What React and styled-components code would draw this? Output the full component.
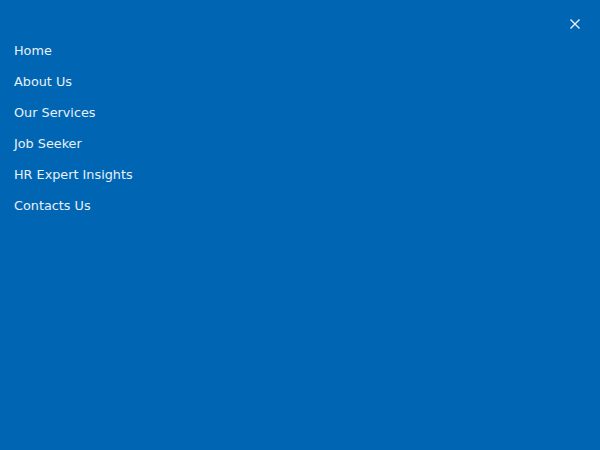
import React from 'react'
import styled, { createGlobalStyle } from 'styled-components'

const links = ['Home', 'About Us', 'Our Services', 'Job Seeker', 'HR Expert Insights', 'Contacts Us']

export default () => (
  <>
    <Global />
    <Drawer>
      <TopBar>
        <Close aria-label="Close">
          <svg width="10" height="10" viewBox="0 0 10 10">
            <path d="M0.5 0.5L9.5 9.5M9.5 0.5L0.5 9.5" stroke="currentColor" strokeWidth="1.4" />
          </svg>
        </Close>
      </TopBar>
      <Nav>
        {links.map(link => (
          <NavLink key={link} href="#">{link}</NavLink>
        ))}
      </Nav>
    </Drawer>
  </>
)

const Global = createGlobalStyle`
  html, body { margin: 0; padding: 0; background: #0066b3; }
  body { font-family: "DejaVu Sans", sans-serif; }
`
const Drawer = styled.div`
  width: 600px;
  height: 450px;
  background: #0066b3;
  display: flex;
  flex-direction: column;
`
const TopBar = styled.div`
  display: flex;
  justify-content: flex-end;
  padding: 19px 20px 0 0;
  height: 16px;
`
const Close = styled.button`
  border: 0;
  background: none;
  padding: 0;
  width: 10px;
  height: 10px;
  color: #e8f0f8;
  display: flex;
  cursor: pointer;
`
const Nav = styled.nav`
  display: flex;
  flex-direction: column;
  padding-left: 14px;
`
const NavLink = styled.a`
  font-size: 12.8px;
  line-height: 31px;
  color: #e8f0f8;
  text-decoration: none;
`
